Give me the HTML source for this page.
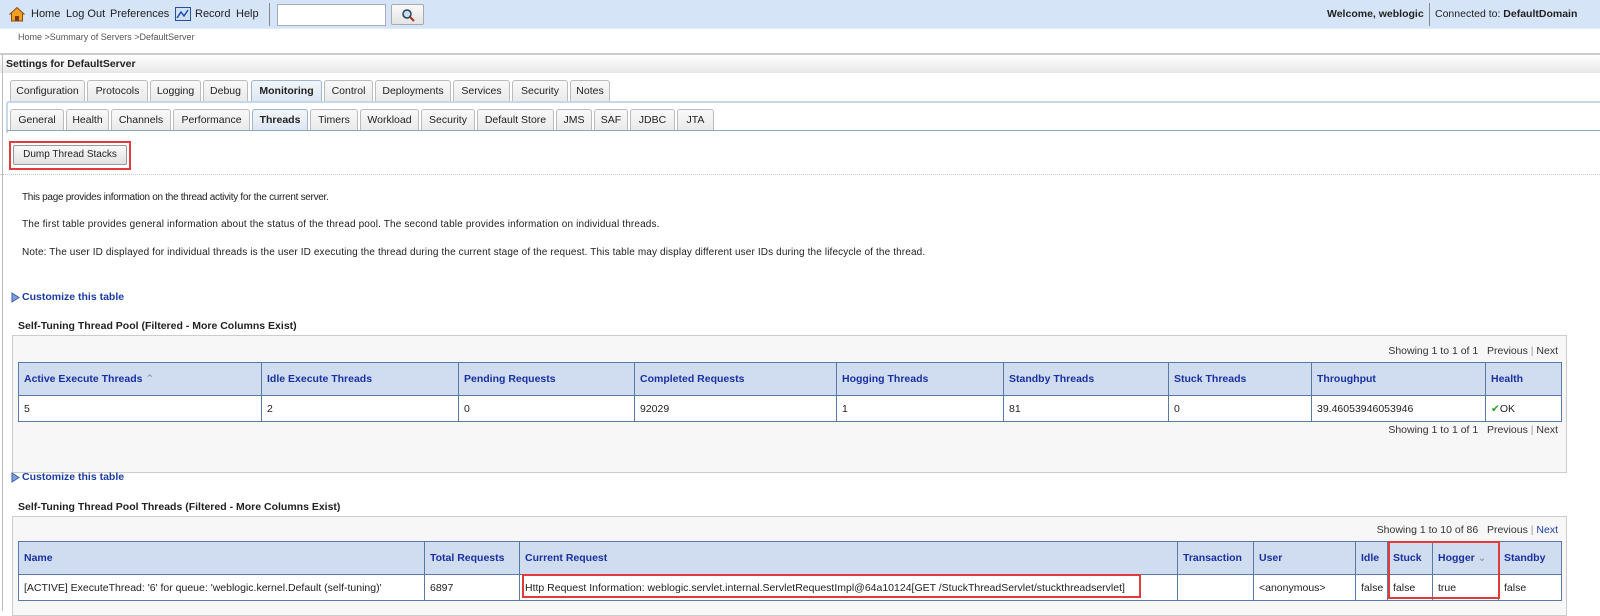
<!DOCTYPE html>
<html><head><meta charset="utf-8"><style>
*{box-sizing:border-box;margin:0;padding:0}
body{width:1600px;height:611px;overflow:hidden;background:#fff;font-family:"Liberation Sans",sans-serif;font-size:10px;color:#222;position:relative}
.a{position:absolute;white-space:nowrap}
.top{left:0;top:0;width:1600px;height:29px;background:#d5e4f7;border-bottom:1px solid #e2ebf6}
.tl{font-size:11px;color:#222;top:8px}
.tab{position:absolute;height:22px;border:1px solid #bbb;border-bottom:none;border-radius:3px 3px 0 0;background:linear-gradient(#f9f9f9,#e9e9e9);font-size:10.5px;text-align:center;line-height:20px;color:#222}
.tab.on{background:linear-gradient(#f2f6fb,#dbe6f2);font-weight:bold;border-color:#9fb4cf}
table{position:absolute;border-collapse:collapse;table-layout:fixed}
td,th{border:1px solid #5a7aa6;font-size:10.5px;text-align:left;padding:0 5px;white-space:nowrap;overflow:hidden}
th{background:#d0dcef;color:#1a2fa0;font-weight:bold;height:33px}
td{background:#fff;height:26px;color:#222}
.box{position:absolute;background:#f7f7f7;border:1px solid #ccc}
.show{font-size:10.5px;color:#333;text-align:right}
.cust{color:#1b3ca3;font-weight:bold;font-size:10.5px}
.red{position:absolute;border:2px solid #e23b3b}
</style></head><body>
<div class="a top"></div>
<svg class="a" style="left:9px;top:6px" width="16" height="16" viewBox="0 0 16 16"><path d="M1 8 L8 1.5 L15 8 L13.5 8 L13.5 15 L2.5 15 L2.5 8Z" fill="#f0a020" stroke="#8a4a10" stroke-width="1"/><rect x="6" y="10" width="4" height="5" fill="#7a3a10"/></svg>
<div class="a tl" style="left:31px">Home</div>
<div class="a tl" style="left:66px">Log Out</div>
<div class="a tl" style="left:110px">Preferences</div>
<svg class="a" style="left:175px;top:7px" width="16" height="14"><rect x="0.5" y="0.5" width="15" height="13" fill="#cfe0f5" stroke="#24529a"/><path d="M2 11 L6 5 L9 9 L13 3" stroke="#1a4ab0" fill="none" stroke-width="1.4"/></svg>
<div class="a tl" style="left:195px">Record</div>
<div class="a tl" style="left:236px">Help</div>
<div class="a" style="left:269px;top:3px;width:1px;height:23px;background:#888"></div>
<div class="a" style="left:277px;top:4px;width:109px;height:22px;background:#fff;border:1px solid #aab"></div>
<div class="a" style="left:391px;top:4px;width:33px;height:21px;background:linear-gradient(#fafafa,#e4e4e4);border:1px solid #aaa;border-radius:2px"></div>
<svg class="a" style="left:401px;top:8px" width="14" height="14"><circle cx="6" cy="6" r="4" fill="#cde" stroke="#245" stroke-width="1.5"/><path d="M9 9 L13 13" stroke="#a33" stroke-width="2.2"/></svg>
<div class="a tl" style="left:1327px;font-weight:bold;font-size:10.5px">Welcome, weblogic</div>
<div class="a" style="left:1429px;top:3px;width:1px;height:23px;background:#888"></div>
<div class="a tl" style="left:1435px;font-size:10.5px">Connected to: <b>DefaultDomain</b></div>
<div class="a" style="left:18px;top:32px;font-size:9px;color:#555">Home &gt;Summary of Servers &gt;DefaultServer</div>
<div class="a" style="left:0;top:53px;width:1600px;height:2px;background:#ccc"></div>
<div class="a" style="left:0;top:55px;width:1600px;height:18px;background:linear-gradient(#fff,#e6e8e6)"></div>
<div class="a" style="left:6px;top:58px;font-weight:bold;font-size:10.5px">Settings for DefaultServer</div>
<div class="a" style="left:2px;top:55px;width:1px;height:556px;background:#bbb"></div>
<div class="tab" style="left:10px;top:80px;width:75px">Configuration</div>
<div class="tab" style="left:87px;top:80px;width:61px">Protocols</div>
<div class="tab" style="left:150px;top:80px;width:51px">Logging</div>
<div class="tab" style="left:203px;top:80px;width:45px">Debug</div>
<div class="tab on" style="left:251px;top:80px;width:71px">Monitoring</div>
<div class="tab" style="left:324px;top:80px;width:49px">Control</div>
<div class="tab" style="left:375px;top:80px;width:76px">Deployments</div>
<div class="tab" style="left:453px;top:80px;width:57px">Services</div>
<div class="tab" style="left:512px;top:80px;width:56px">Security</div>
<div class="tab" style="left:570px;top:80px;width:40px">Notes</div>
<div class="a" style="left:7px;top:101px;width:1593px;height:2px;background:#c7d7ea"></div>
<div class="a" style="left:6px;top:103px;width:2px;height:30px;background:#c7d7ea"></div>
<div class="tab" style="left:10px;top:109px;width:54px">General</div>
<div class="tab" style="left:66px;top:109px;width:43px">Health</div>
<div class="tab" style="left:111px;top:109px;width:60px">Channels</div>
<div class="tab" style="left:173px;top:109px;width:77px">Performance</div>
<div class="tab on" style="left:252px;top:109px;width:56px">Threads</div>
<div class="tab" style="left:310px;top:109px;width:48px">Timers</div>
<div class="tab" style="left:360px;top:109px;width:59px">Workload</div>
<div class="tab" style="left:421px;top:109px;width:54px">Security</div>
<div class="tab" style="left:477px;top:109px;width:77px">Default Store</div>
<div class="tab" style="left:556px;top:109px;width:36px">JMS</div>
<div class="tab" style="left:594px;top:109px;width:34px">SAF</div>
<div class="tab" style="left:630px;top:109px;width:45px">JDBC</div>
<div class="tab" style="left:677px;top:109px;width:37px">JTA</div>
<div class="a" style="left:7px;top:130px;width:1593px;height:1px;background:#8fa6c4"></div>
<div class="red" style="left:9px;top:141px;width:122px;height:29px"></div>
<div class="a" style="left:13px;top:145px;width:114px;height:20px;background:linear-gradient(#fafafa,#e2e2e2);border:1px solid #999;border-radius:2px;font-size:10px;text-align:center;line-height:18px">Dump Thread Stacks</div>
<div class="a" style="left:0;top:174px;width:1600px;border-top:1px dotted #ccc"></div>
<div class="a" style="left:22px;top:192px;letter-spacing:-0.3px">This page provides information on the thread activity for the current server.</div>
<div class="a" style="left:22px;top:219px;letter-spacing:0.15px">The first table provides general information about the status of the thread pool. The second table provides information on individual threads.</div>
<div class="a" style="left:22px;top:247px;letter-spacing:0.13px">Note: The user ID displayed for individual threads is the user ID executing the thread during the current stage of the request. This table may display different user IDs during the lifecycle of the thread.</div>
<svg class="a" style="left:11px;top:292px" width="9" height="11"><path d="M1 1 L8 5.5 L1 10Z" fill="#7da0d8" stroke="#3a5ea8"/></svg>
<div class="a cust" style="left:22px;top:291px">Customize this table</div>
<div class="a" style="left:18px;top:320px;font-weight:bold;font-size:10.5px">Self-Tuning Thread Pool (Filtered - More Columns Exist)</div>
<div class="box" style="left:12px;top:335px;width:1555px;height:138px"></div>
<div class="a show" style="right:42px;top:345px">Showing 1 to 1 of 1 &nbsp; Previous <span style="color:#999">|</span> Next</div>
<table style="left:18px;top:362px;width:1543px">
<colgroup><col style="width:243px"><col style="width:197px"><col style="width:176px"><col style="width:202px"><col style="width:167px"><col style="width:165px"><col style="width:143px"><col style="width:174px"><col style="width:76px"></colgroup>
<tr><th>Active Execute Threads <span style="color:#88a;font-weight:normal">&#8963;</span></th><th>Idle Execute Threads</th><th>Pending Requests</th><th>Completed Requests</th><th>Hogging Threads</th><th>Standby Threads</th><th>Stuck Threads</th><th>Throughput</th><th>Health</th></tr>
<tr><td>5</td><td>2</td><td>0</td><td>92029</td><td>1</td><td>81</td><td>0</td><td>39.46053946053946</td><td><span style="color:#2a2">&#10004;</span>OK</td></tr>
</table>
<div class="a show" style="right:42px;top:424px">Showing 1 to 1 of 1 &nbsp; Previous <span style="color:#999">|</span> Next</div>
<svg class="a" style="left:11px;top:472px" width="9" height="11"><path d="M1 1 L8 5.5 L1 10Z" fill="#7da0d8" stroke="#3a5ea8"/></svg>
<div class="a cust" style="left:22px;top:471px">Customize this table</div>
<div class="a" style="left:18px;top:501px;font-weight:bold;font-size:10.5px">Self-Tuning Thread Pool Threads (Filtered - More Columns Exist)</div>
<div class="box" style="left:12px;top:516px;width:1555px;height:100px"></div>
<div class="a show" style="right:42px;top:524px">Showing 1 to 10 of 86 &nbsp; Previous <span style="color:#999">|</span> <span style="color:#1b3ca3">Next</span></div>
<table style="left:18px;top:541px;width:1543px">
<colgroup><col style="width:406px"><col style="width:95px"><col style="width:658px"><col style="width:76px"><col style="width:102px"><col style="width:32px"><col style="width:45px"><col style="width:66px"><col style="width:63px"></colgroup>
<tr><th>Name</th><th>Total Requests</th><th>Current Request</th><th>Transaction</th><th>User</th><th>Idle</th><th>Stuck</th><th>Hogger <span style="color:#88a;font-weight:normal">&#8964;</span></th><th>Standby</th></tr>
<tr><td>[ACTIVE] ExecuteThread: '6' for queue: 'weblogic.kernel.Default (self-tuning)'</td><td>6897</td><td>Http Request Information: weblogic.servlet.internal.ServletRequestImpl@64a10124[GET /StuckThreadServlet/stuckthreadservlet]</td><td></td><td>&lt;anonymous&gt;</td><td>false</td><td>false</td><td>true</td><td>false</td></tr>
</table>
<div class="red" style="left:522px;top:574px;width:619px;height:24px"></div>
<div class="red" style="left:1388px;top:541px;width:112px;height:58px"></div>
</body></html>
